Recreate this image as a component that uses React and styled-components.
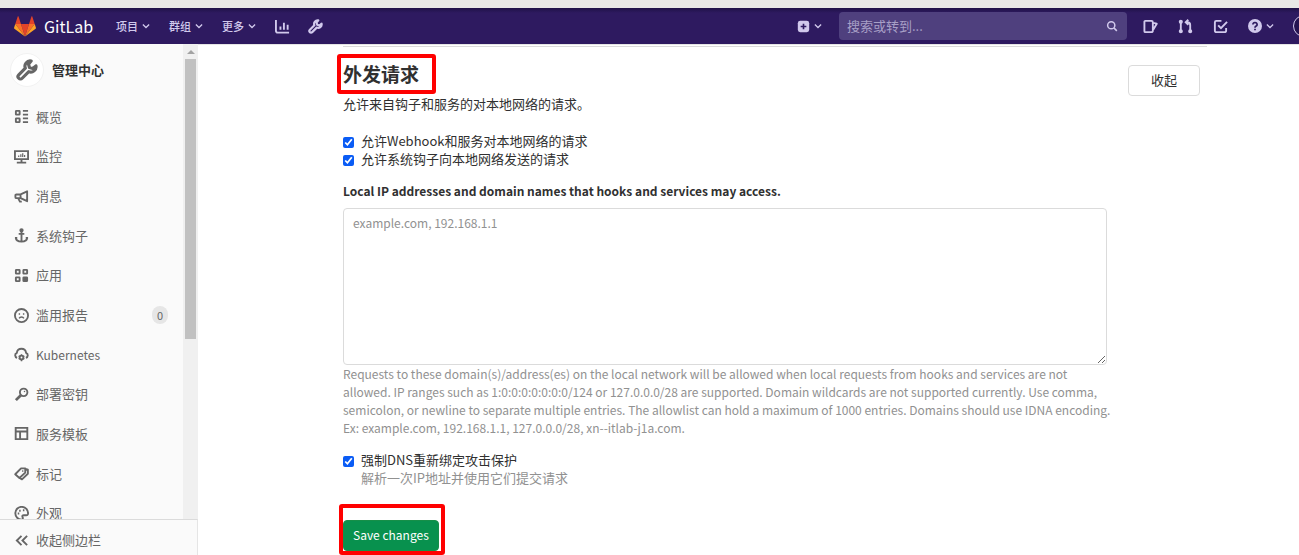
import styled, { createGlobalStyle } from 'styled-components';

const menus = ['项目', '群组', '更多'];

const sidebarItems = [
  { icon: 'overview', label: '概览' },
  { icon: 'monitor', label: '监控' },
  { icon: 'messages', label: '消息' },
  { icon: 'hook', label: '系统钩子' },
  { icon: 'applications', label: '应用' },
  { icon: 'abuse', label: '滥用报告', count: 0 },
  { icon: 'kubernetes', label: 'Kubernetes', latin: true },
  { icon: 'key', label: '部署密钥' },
  { icon: 'template', label: '服务模板' },
  { icon: 'labels', label: '标记' },
  { icon: 'appearance', label: '外观' },
];

// all icons share a 16 x 16 grid
const icons = {
  chevron: <path d='M3 5.5l5 5 5-5' />,
  chart: (
    <>
      <path d='M1 1v11.5a2 2 0 0 0 2 2h12' />
      <path d='M5.8 8v3.5M9.5 4v7.5M13.5 6v5.5' />
    </>
  ),
  wrench: (
    <path
      d='M11 1.500a3.800 3.800 0 0 0-4.200 5.200L2 11.500a1.750 1.750 0 1 0 2.500 2.500l4.800-4.800a3.800 3.800 0 0 0 5.200-4.200l-2.300 1.900-2.400-.7-.7-2.400z'
      strokeLinejoin='round'
      strokeWidth='2.300'
    />
  ),
  plus: (
    <>
      <rect x='1' y='1' width='14' height='14' rx='3' fill='currentColor' stroke='none' />
      <path d='M8 4.500v7M4.500 8h7' stroke='#2e1a60' />
    </>
  ),
  search: (
    <>
      <circle cx='7' cy='7' r='4.800' />
      <path d='M10.500 10.500l4 4' />
    </>
  ),
  issues: (
    <path
      d='M2.500 2h6.500a1.500 1.500 0 0 1 1.500 1.500v9a1.500 1.500 0 0 1-1.500 1.500h-6.500A1 1 0 0 1 1.500 13V3A1 1 0 0 1 2.500 2zM11 4.200l3.700.8-3.700 6.300'
      strokeLinejoin='round'
    />
  ),
  merge: (
    <>
      <path d='M3 4v8M13 12V6.500a3 3 0 0 0-3-3H8.500M11 .800L8.200 3.500 11 6.200' />
      <circle cx='3' cy='3' r='1.200' fill='currentColor' />
      <circle cx='3' cy='13' r='1.200' fill='currentColor' />
      <circle cx='13' cy='13' r='1.200' fill='currentColor' />
    </>
  ),
  todo: (
    <>
      <path d='M9 2H3.500A1.500 1.500 0 0 0 2 3.500v9A1.500 1.500 0 0 0 3.500 14h9a1.500 1.500 0 0 0 1.500-1.500V9.500' />
      <path d='M5.500 6.800L8.500 9.800 15 3' />
    </>
  ),
  help: (
    <>
      <circle cx='8' cy='8' r='8' fill='currentColor' stroke='none' />
      <path d='M5.600 6.200a2.400 2.200 0 1 1 3.700 1.900C8.300 8.700 8 9 8 9.900M8 11v1.900' stroke='#2e1a60' />
    </>
  ),
  overview: (
    <>
      <rect x='2' y='2' width='4' height='4' rx='.5' />
      <rect x='2' y='10' width='4' height='4' rx='.5' />
      <path d='M9.500 2H15M9.500 6H15M9.500 10H15M9.500 14H15' />
    </>
  ),
  monitor: (
    <>
      <path d='M1 2.300h14v8.500H1zM8 11v3M3 14.500h10' />
      <path d='M5 7v1.500M7.300 5.500v3M9.300 4.500v4M11.300 6.500v2' strokeWidth='1.300' />
    </>
  ),
  messages: (
    <path d='M2.500 5.800H7L14 2.500v10.500L7 9.700H2.500a1 1 0 0 1-1-1V6.800a1 1 0 0 1 1-1zM7 6v3.500M4.500 10l1.800 3.500h2' strokeLinejoin='round' />
  ),
  hook: (
    <>
      <circle cx='8' cy='2.500' r='1.300' fill='currentColor' />
      <path d='M8 3v11M5 6.200h6M1 10.500h2.500M12.500 10.500H15M2 10.500c0 3 2.500 4 6 4s6-1 6-4' />
    </>
  ),
  applications: (
    <>
      <rect x='2' y='2' width='4' height='4' rx='.5' />
      <rect x='10' y='2' width='4' height='4' rx='.5' />
      <rect x='2' y='10' width='4' height='4' rx='.5' />
      <rect x='10' y='10' width='4' height='4' rx='.5' fill='currentColor' />
    </>
  ),
  abuse: (
    <>
      <circle cx='8' cy='8' r='7' />
      <path d='M5 6.500h1.500M9.500 6.500H11M5.500 11c1-2 4-2 5 0' strokeWidth='1.600' />
    </>
  ),
  kubernetes: (
    <>
      <path d='M3.300 11.500A2.800 2.800 0 0 1 3 6.200a5 5 0 0 1 9.900 0 2.800 2.800 0 0 1-.2 5.300' />
      <circle cx='8' cy='11.200' r='2' />
      <path d='M8 7.700v1.500M8 13.200v2M5 9.400l1.300.8M9.700 12.200l1.300.8M11 9.400l-1.300.8M6.300 12.200l-1.300.8' strokeWidth='1.600' />
    </>
  ),
  key: (
    <>
      <circle cx='10.300' cy='5.700' r='4' />
      <path d='M7.300 8.700L2 14' strokeWidth='3' />
      <circle cx='11.200' cy='4.800' r='.8' fill='currentColor' stroke='none' />
    </>
  ),
  template: <path d='M1.800 2h12.400v12H1.800zM2 5.800h12M6.500 6v8' />,
  labels: (
    <>
      <path d='M7.500 2.500H12v4.500L5.800 12.800 1.300 8.800zM12.500 3.200l2.300.8v4.300L8.500 14.300 6 12.800' strokeLinejoin='round' />
      <circle cx='9.300' cy='5.300' r='.9' fill='currentColor' stroke='none' />
    </>
  ),
  appearance: (
    <>
      <path d='M8 14.500A6.800 6.800 0 1 1 15 8c0 1.500-1 2-2.500 1.800h-2c-1.500 0-2 1-1.300 2.200.6 1.200 0 2.500-1.200 2.500z' />
      <path d='M4 8h1.600M5.500 5h1.600M9.500 4.500h1.600' />
    </>
  ),
  collapse: <path d='M8 3L3 8l5 5M14 3L9 8l5 5' />,
};

const Icon = ({ name, size = 15 }) => (
  <Svg viewBox='0 0 16 16' $size={size} aria-hidden='true'>
    {icons[name]}
  </Svg>
);

const Tanuki = () => (
  <LogoSvg viewBox='0 0 36 34' aria-hidden='true'>
    <path fill='#e24329' d='M18 34l6.600-20.400H11.400z' />
    <path fill='#fc6d26' d='M18 34l-6.600-20.400H2.100zM18 34l6.600-20.400h9.300z' />
    <path fill='#fca326' d='M2.100 13.600L.1 19.800c-.2.600 0 1.200.5 1.500L18 34zM33.900 13.600l2 6.200c.2.600 0 1.200-.5 1.500L18 34z' />
    <path fill='#e24329' d='M2.100 13.600h9.300l-4-12.300c-.2-.6-1.100-.6-1.300 0zM33.900 13.600h-9.300l4-12.300c.2-.6 1.100-.6 1.300 0z' />
  </LogoSvg>
);

const Navbar = () => (
  <Header>
    <Brand href='#'>
      <Tanuki />
      GitLab
    </Brand>
    <Menus>
      {menus.map((menu) => (
        <NavButton key={menu}>
          {menu}
          <Icon name='chevron' size={10} />
        </NavButton>
      ))}
      <NavButton aria-label='统计'>
        <Icon name='chart' />
      </NavButton>
      <NavButton aria-label='管理中心'>
        <Icon name='wrench' />
      </NavButton>
    </Menus>
    <NavButton aria-label='新建'>
      <Icon name='plus' size={13} />
      <Icon name='chevron' size={10} />
    </NavButton>
    <Search>
      <SearchInput type='text' aria-label='搜索' placeholder='搜索或转到...' />
      <Icon name='search' size={12} />
    </Search>
    <Shortcuts>
      <NavButton aria-label='议题'>
        <Icon name='issues' />
      </NavButton>
      <NavButton aria-label='合并请求'>
        <Icon name='merge' />
      </NavButton>
      <NavButton aria-label='待办事项'>
        <Icon name='todo' />
      </NavButton>
      <NavButton aria-label='帮助'>
        <Icon name='help' size={14} />
        <Icon name='chevron' size={10} />
      </NavButton>
    </Shortcuts>
    <Avatar aria-label='用户' />
  </Header>
);

const Sidebar = () => (
  <Aside>
    <SidebarScroll>
      <SidebarContent>
        <Context href='#'>
          <ContextIcon>
            <Icon name='wrench' size={22} />
          </ContextIcon>
          管理中心
        </Context>
        <SidebarList>
          {sidebarItems.map(({ icon, label, count, latin }) => (
            <SidebarItem key={label}>
              <SidebarLink href='#' $latin={latin}>
                <Icon name={icon} />
                {label}
                {count !== undefined && <Count>{count}</Count>}
              </SidebarLink>
            </SidebarItem>
          ))}
        </SidebarList>
      </SidebarContent>
      <Track>
        <Arrow />
        <Thumb />
      </Track>
    </SidebarScroll>
    <Collapse>
      <Icon name='collapse' />
      收起侧边栏
    </Collapse>
  </Aside>
);

const App = () => {
  return (
    <Page>
      <GlobalStyle />
      <Navbar />
      <Body>
        <Sidebar />
        <Main>
          <Section>
            <SectionHeader>
              <div>
                <Marked>
                  <Title>外发请求</Title>
                  <TitleMark />
                </Marked>
                <Text>允许来自钩子和服务的对本地网络的请求。</Text>
              </div>
              <Toggle>收起</Toggle>
            </SectionHeader>

            <Form>
              <Group>
                <Check>
                  <Checkbox type='checkbox' defaultChecked />
                  允许Webhook和服务对本地网络的请求
                </Check>
                <Check>
                  <Checkbox type='checkbox' defaultChecked />
                  允许系统钩子向本地网络发送的请求
                </Check>
              </Group>

              <Group>
                <Label htmlFor='allowlist'>
                  Local IP addresses and domain names that hooks and services may access.
                </Label>
                <Textarea id='allowlist' placeholder='example.com, 192.168.1.1' />
                <Help>
                  Requests to these domain(s)/address(es) on the local network will be allowed when
                  local requests from hooks and services are not allowed. IP ranges such as
                  1:0:0:0:0:0:0:0/124 or 127.0.0.0/28 are supported. Domain wildcards are not
                  supported currently. Use comma, semicolon, or newline to separate multiple
                  entries. The allowlist can hold a maximum of 1000 entries. Domains should use IDNA
                  encoding. Ex: example.com, 192.168.1.1, 127.0.0.0/28, xn--itlab-j1a.com.
                </Help>
              </Group>

              <Group>
                <Check>
                  <Checkbox type='checkbox' defaultChecked />
                  <span>
                    强制DNS重新绑定攻击保护
                    <Hint>解析一次IP地址并使用它们提交请求</Hint>
                  </span>
                </Check>
              </Group>

              <SaveMarked>
                <Save type='button'>Save changes</Save>
                <SaveMark />
              </SaveMarked>
            </Form>
          </Section>
        </Main>
      </Body>
    </Page>
  );
};

export default App;

const GlobalStyle = createGlobalStyle`
  * {
    box-sizing: border-box;
  }

  body {
    margin: 0;
    color: #303030;
    background: #fff;
    font: 13px/18px 'Noto Sans CJK SC', 'Noto Sans', sans-serif;
  }

  button,
  input,
  textarea {
    font: inherit;
  }

  a {
    color: inherit;
    text-decoration: none;
  }
`;

const Page = styled.div`
  display: flex;
  flex-direction: column;
  height: 100vh;
  overflow: hidden;
  border-top: 8px solid #e8e8e6;
`;

const Svg = styled.svg`
  flex: none;
  width: ${({ $size }) => $size}px;
  height: ${({ $size }) => $size}px;
  fill: none;
  stroke: currentColor;
  stroke-width: 2;
`;

const LogoSvg = styled.svg`
  width: 22px;
  height: 22px;
`;

const Header = styled.header`
  display: flex;
  flex: none;
  align-items: center;
  height: 36px;
  padding-left: 14px;
  overflow: hidden;
  color: #d1c9ec;
  background: linear-gradient(#1f1247, #2e1a60 5px);
`;

const Brand = styled.a`
  display: flex;
  align-items: center;
  gap: 8px;
  margin-right: 23px;
  color: #fff;
  font-size: 16px;
`;

const Menus = styled.nav`
  display: flex;
  flex: 1;
  gap: 18px;
`;

const NavButton = styled.button`
  display: flex;
  align-items: center;
  gap: 3px;
  padding: 0;
  border: 0;
  color: inherit;
  background: none;
  font-size: 11px;
  font-weight: 500;
  line-height: 16px;
`;

const Search = styled.div`
  display: flex;
  align-items: center;
  width: 288px;
  height: 28px;
  margin: 0 16px;
  padding: 0 9px 0 8px;
  border-radius: 4px;
  background: #4f407e;
`;

const SearchInput = styled.input`
  flex: 1;
  min-width: 0;
  padding: 0;
  border: 0;
  outline: 0;
  color: inherit;
  background: none;

  &::placeholder {
    color: #a79fc6;
  }
`;

const Shortcuts = styled.div`
  display: flex;
  gap: 20px;
`;

const Avatar = styled.button`
  flex: none;
  width: 22px;
  height: 22px;
  margin: 0 -16px 0 18px;
  border: 1px solid #d1c9ec;
  border-radius: 50%;
  background: #251350;
`;

const Body = styled.div`
  display: flex;
  flex: 1;
  min-height: 0;
`;

const Aside = styled.aside`
  display: flex;
  flex: none;
  flex-direction: column;
  width: 198px;
  color: #666;
  background: #fafafa;
`;

const SidebarScroll = styled.div`
  display: flex;
  flex: 1;
  min-height: 0;
  overflow: hidden;
`;

const SidebarContent = styled.div`
  flex: 1;
`;

const Context = styled.a`
  display: flex;
  align-items: center;
  gap: 8px;
  padding: 9px 10px 10px;
  color: #303030;
  font-weight: 600;
`;

const ContextIcon = styled.span`
  display: flex;
  align-items: center;
  justify-content: center;
  width: 34px;
  height: 34px;
  border: 1px solid #f2f2f2;
  border-radius: 50%;
  color: #666;
  background: #fff;
`;

const SidebarList = styled.ul`
  display: flex;
  flex-direction: column;
  height: 436px;
  margin: 0;
  padding: 0;
  list-style: none;
`;

const SidebarItem = styled.li`
  display: flex;
  flex: 1;
`;

const SidebarLink = styled.a`
  display: flex;
  flex: 1;
  align-items: center;
  gap: 7px;
  padding: 0 15px 0 14px;
  font-size: ${({ $latin }) => ($latin ? 12 : 13)}px;
`;

const Count = styled.span`
  margin-left: auto;
  padding: 0 5px;
  border-radius: 9px;
  background: #e6e6e6;
  font-size: 11px;
`;

const Track = styled.div`
  display: flex;
  flex-direction: column;
  align-items: center;
  width: 15px;
  background: #f0f0f0;
`;

const Arrow = styled.span`
  margin: 6px 0 5px;
  border: 4px solid transparent;
  border-top: 0;
  border-bottom-color: #a3a3a3;
`;

const Thumb = styled.span`
  width: 11px;
  height: 280px;
  background: #c1c1c1;
`;

const Collapse = styled.button`
  display: flex;
  align-items: center;
  gap: 7px;
  height: 36px;
  padding: 5px 14px 0;
  border: 0;
  border-top: 1px solid #dbdbdb;
  border-right: 1px solid #e5e5e5;
  color: inherit;
  background: #fafafa;
`;

const Main = styled.main`
  flex: 1;
  min-width: 0;
  padding: 1px 92px 0 145px;
  overflow: hidden;
  border-top: 1px solid #e5e5e5;
`;

const Section = styled.section`
  max-width: 864px;
  border-top: 1px solid #dbdbdb;
`;

const SectionHeader = styled.div`
  display: flex;
  justify-content: space-between;
  padding: 18px 7px 0 0;
`;

const Marked = styled.div`
  position: relative;
  width: fit-content;
`;

const Mark = styled.span`
  position: absolute;
  border: 4px solid #f00;
  border-radius: 3px;
  pointer-events: none;
`;

const TitleMark = styled(Mark)`
  inset: -11px -17px -11px -6px;
`;

const Title = styled.h4`
  margin: 0;
  font-size: 19px;
  font-weight: 700;
  line-height: 18px;
`;

const Text = styled.p`
  margin: 12px 0 0;
`;

const Toggle = styled.button`
  width: 72px;
  height: 31px;
  padding: 0 0 2px;
  border: 1px solid #dbdbdb;
  border-radius: 4px;
  color: #303030;
  background: #fff;
`;

const Form = styled.form`
  max-width: 764px;
  margin-top: 19px;
`;

const Group = styled.div`
  margin-bottom: 14px;
`;

const Check = styled.label`
  display: flex;
  gap: 7px;
`;

const Checkbox = styled.input`
  flex: none;
  width: 11px;
  height: 11px;
  margin: 5px 0 0;
  accent-color: #0a5cf5;
`;

const Label = styled.label`
  display: block;
  margin-bottom: 8px;
  font-size: 12px;
  font-weight: 600;
`;

const Textarea = styled.textarea`
  display: block;
  width: 100%;
  height: 157px;
  padding: 5px 9px;
  border: 1px solid #dbdbdb;
  border-radius: 4px;
  font-size: 12px;

  &::placeholder {
    color: #919191;
  }
`;

const Help = styled.p`
  margin: 0 -6px 0 0;
  color: #919191;
  font-size: 12px;
`;

const Hint = styled.span`
  display: block;
  color: #919191;
`;

const SaveMarked = styled(Marked)`
  margin-top: 33px;
`;

const SaveMark = styled(Mark)`
  inset: -16px -6px -4px -4px;
`;

const Save = styled.button`
  display: block;
  height: 31px;
  padding: 0 9px 2px;
  border: 1px solid #168f48;
  border-radius: 4px;
  color: #fff;
  background: #08914e;
  font-size: 12px;
`;
